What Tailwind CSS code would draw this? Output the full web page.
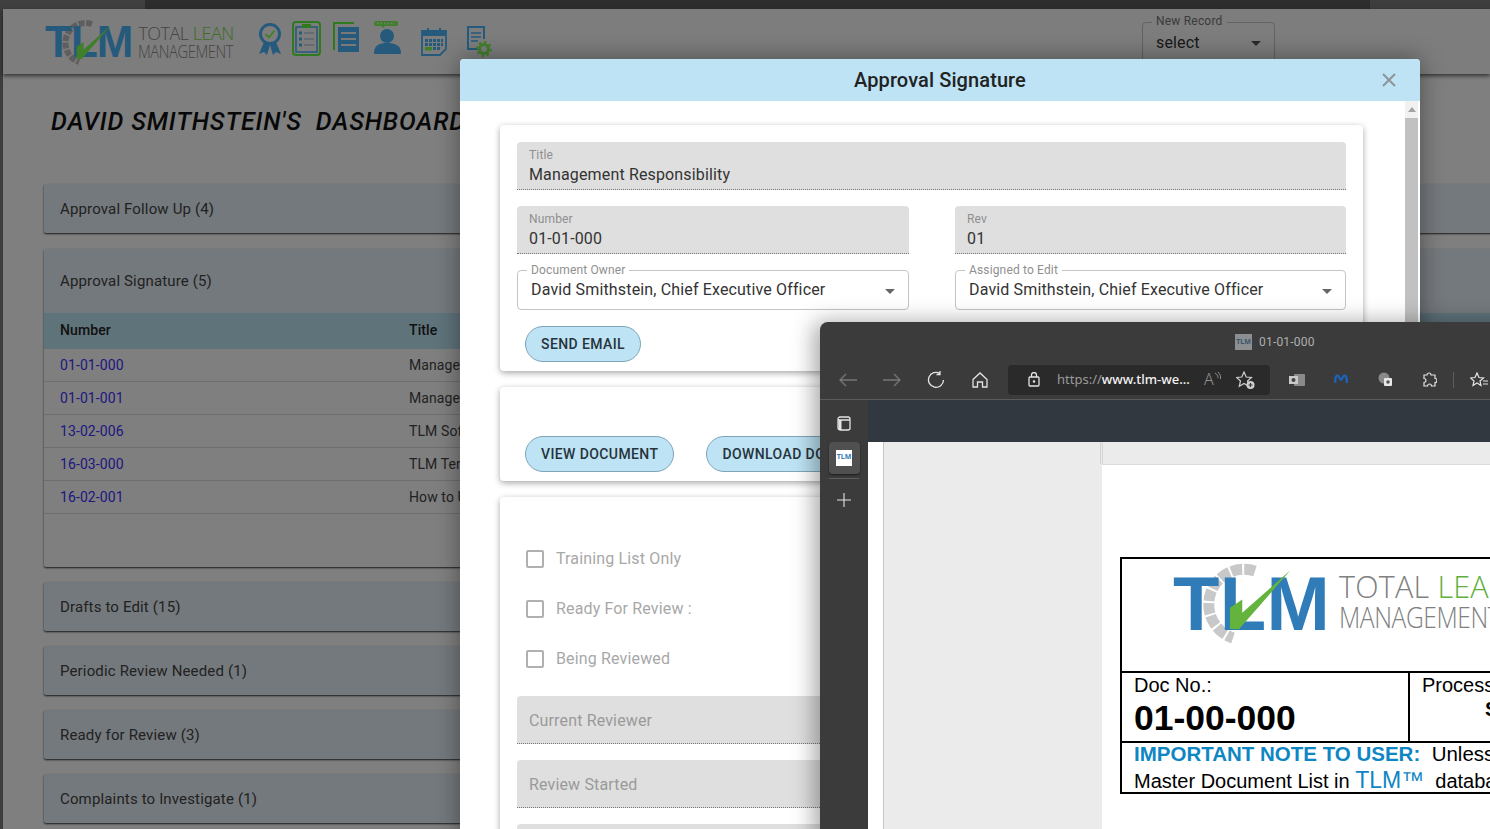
<!DOCTYPE html>
<html lang="en">
<head>
  <meta charset="UTF-8">
  <title>Approval Signature</title>
  <script src="https://cdn.jsdelivr.net/npm/@tailwindcss/browser@4"></script>
</head>
<body class="m-0 overflow-hidden">
<div class="relative w-[1490px] h-[829px] overflow-hidden bg-white font-['Roboto',sans-serif]">

  <!-- dashboard behind the dialog -->
  <div class="flex flex-col h-full">
    <div class="flex h-[9px] shrink-0 bg-[#7a7a7a]">
      <div class="w-[145px] bg-[#808080]"></div>
      <div class="w-[1225px] bg-[#5a5a5a]"></div>
    </div>
    <div class="flex flex-1 min-h-0">
      <div class="w-[3px] bg-[#7a7a7a] shrink-0"></div>
      <div class="flex-1 min-w-0 flex flex-col">
        <header class="h-[65px] shrink-0 bg-[#fafafa] flex items-center shadow-[0_2px_4px_rgba(0,0,0,0.6)] relative">
          <div class="flex items-center ml-[42px] mt-[1px] w-[196px] h-[44px] relative">
            <svg class="absolute left-[13px] top-[-3px]" width="50" height="50" viewBox="0 0 50 50"><path d="M34 7A20 20 0 0 0 21 45" fill="none" stroke="#bdbdbd" stroke-width="6" stroke-dasharray="6 1.500"/></svg>
            <span class="relative font-['Liberation_Sans',sans-serif] font-bold text-[44px] leading-none tracking-[-1px] text-[#4cb4fa]">TLM</span>
            <svg class="absolute left-[30px] top-[4px]" width="38" height="36" viewBox="380 55 200 190"><path d="M388 238V175L425 150V190L570 62L415 240Z" fill="#7eff54"/></svg>
            <div class="relative ml-[6px] font-['Open_Sans',sans-serif] font-light text-[#8a8a8a] text-[18px] leading-[18px] tracking-[-0.5px] whitespace-nowrap">
              <div>TOTAL <span class="text-[#7ed84e]">LEAN</span></div>
              <div class="origin-left scale-x-[0.82]">MANAGEMENT</div>
            </div>
          </div>
          <div class="absolute left-[255px] top-[13px] flex items-start">
            <svg width="24" height="34" viewBox="0 0 24 34"><circle cx="12" cy="12" r="9.500" fill="none" stroke="#4cb4fa" stroke-width="3"/><path d="M7.500 12 L11 15.500 L16.500 8.500" fill="none" stroke="#7eff54" stroke-width="1.800"/><path d="M6 20 L1 32 L6 30 L9 33 L12 23 L15 33 L18 30 L23 32 L18 20 L12 23Z" fill="#4cb4fa"/></svg>
            <div class="w-[29px] h-[35px] ml-[10px] -mt-[1px] rounded-[4px] border-[2px] border-[#5ef43e] flex items-center justify-center">
              <svg width="23" height="29" viewBox="0 0 23 29"><rect x="1" y="3" width="21" height="25" fill="none" stroke="#4cb4fa" stroke-width="1.600"/><rect x="7" y="0" width="9" height="4" fill="#5ef43e"/><path d="M4 9h3M4 15h3M4 21h3" stroke="#4cb4fa" stroke-width="3"/><path d="M9 9h10M9 15h10M9 21h10" stroke="#bcd" stroke-width="1.500"/></svg>
            </div>
            <svg class="ml-[12px]" width="27" height="31" viewBox="0 0 27 31"><path d="M1 28V1h20" fill="none" stroke="#5ef43e" stroke-width="2"/><rect x="5" y="5" width="21" height="25" fill="#4cb4fa"/><path d="M8 11h15M8 17h15M8 23h15" stroke="#f2f2f2" stroke-width="2"/></svg>
            <svg class="ml-[13px] -mt-[1px]" width="29" height="33" viewBox="0 0 29 33"><rect x="1" y="0" width="24" height="5" rx="2" fill="#7eff54"/><path d="M4 2.500h18" stroke="#fafafa" stroke-width="1.500" stroke-dasharray="1.500 2"/><path d="M8 5l2 2 2-2z" fill="#7eff54"/><circle cx="14" cy="15" r="7" fill="#4cb4fa"/><path d="M1 32c0-8 6-10 13-10s14 2 14 10c0 1-1 1-2 1H3c-1 0-2 0-2-1z" fill="#4cb4fa"/></svg>
            <svg class="ml-[19px] mt-[5px]" width="26" height="29" viewBox="0 0 26 29"><path d="M1 4h24v18l-6 6H1z" fill="none" stroke="#4cb4fa" stroke-width="1.800"/><rect x="1" y="4" width="24" height="5" fill="#4cb4fa"/><path d="M7 1v6M19 1v6" stroke="#4cb4fa" stroke-width="2"/><path d="M4 13.500h18M4 17.500h18" stroke="#4cb4fa" stroke-width="3" stroke-dasharray="3 1"/><rect x="4" y="20" width="7" height="3.500" fill="#7eff54"/><path d="M12 20h3v3h-3zM16 20h3v3h-3z" fill="#4cb4fa"/></svg>
            <svg class="ml-[19px] mt-[3px]" width="26" height="32" viewBox="0 0 26 32"><path d="M12 24H2V2h16v12" fill="none" stroke="#4cb4fa" stroke-width="2"/><path d="M5 8h10M5 12h10M5 16h7" stroke="#4cb4fa" stroke-width="1.500"/><circle cx="18" cy="24" r="4.500" fill="none" stroke="#7eff54" stroke-width="3"/><circle cx="18" cy="24" r="6.800" fill="none" stroke="#7eff54" stroke-width="2.200" stroke-dasharray="2.500 2.800"/></svg>
          </div>
          <div class="absolute left-[1139px] top-[13px] w-[133px] h-[44px] rounded-[4px] border border-[#c4c4c4]">
            <span class="absolute left-[9px] -top-[9px] px-[4px] bg-[#fafafa] text-[12px] leading-[14px] tracking-[0.2px] text-[#777]">New Record</span>
            <span class="absolute left-[13px] top-[10px] text-[16px] leading-[20px] tracking-[0.15px] text-[#333]">select</span>
            <span class="absolute right-[13px] top-[18px] w-0 h-0 border-x-[5px] border-x-transparent border-t-[5px] border-t-[#555]"></span>
          </div>
        </header>

        <main class="flex-1 min-h-0 pl-[41px] pt-[33px] bg-white">
          <h1 class="ml-[7px] italic font-medium text-[25px] leading-[30px] tracking-[0.85px] text-[#111] whitespace-pre">DAVID SMITHSTEIN'S  DASHBOARD</h1>
          <div class="mt-[47px] w-[1500px] flex flex-col gap-[15px] text-[15px] text-[#444] tracking-[0.15px]">
            <div class="h-[49px] mb-[1px] flex items-center pl-[16px] pt-[1px] bg-[#e9f3fa] shadow-[0_1px_2px_rgba(0,0,0,0.8)] rounded-[2px]">Approval Follow Up (4)</div>

            <div class="h-[318px] bg-[#fff] shadow-[0_1px_2px_rgba(0,0,0,0.8)] rounded-[2px] flex flex-col">
              <div class="h-[64px] flex items-center pl-[16px] bg-[#e9f3fa]">Approval Signature (5)</div>
              <div class="h-[36px] flex items-center pl-[16px] pb-[1px] bg-[#bfe7f7] text-[14px] font-medium text-[#222] tracking-[0.1px]">
                <span class="w-[349px]">Number</span><span>Title</span>
              </div>
              <div class="text-[14px] tracking-[0.1px] text-[#444]">
                <div class="h-[33px] flex items-center pl-[16px] border-b border-[#ddd]"><a class="w-[349px] text-[#4030ff]">01-01-000</a><span>Management Responsibility</span></div>
                <div class="h-[33px] flex items-center pl-[16px] border-b border-[#ddd]"><a class="w-[349px] text-[#4030ff]">01-01-001</a><span>Management Review</span></div>
                <div class="h-[33px] flex items-center pl-[16px] border-b border-[#ddd]"><a class="w-[349px] text-[#4030ff]">13-02-006</a><span>TLM Software</span></div>
                <div class="h-[33px] flex items-center pl-[16px] border-b border-[#ddd]"><a class="w-[349px] text-[#4030ff]">16-03-000</a><span>TLM Terms</span></div>
                <div class="h-[33px] flex items-center pl-[16px] border-b border-[#ddd]"><a class="w-[349px] text-[#4030ff]">16-02-001</a><span>How to Use</span></div>
              </div>
            </div>

            <div class="h-[49px] flex items-center pl-[16px] pt-[1px] bg-[#e9f3fa] shadow-[0_1px_2px_rgba(0,0,0,0.8)] rounded-[2px]">Drafts to Edit (15)</div>
            <div class="h-[49px] flex items-center pl-[16px] pt-[1px] bg-[#e9f3fa] shadow-[0_1px_2px_rgba(0,0,0,0.8)] rounded-[2px]">Periodic Review Needed (1)</div>
            <div class="h-[49px] flex items-center pl-[16px] pt-[1px] bg-[#e9f3fa] shadow-[0_1px_2px_rgba(0,0,0,0.8)] rounded-[2px]">Ready for Review (3)</div>
            <div class="h-[49px] flex items-center pl-[16px] pt-[1px] bg-[#e9f3fa] shadow-[0_1px_2px_rgba(0,0,0,0.8)] rounded-[2px]">Complaints to Investigate (1)</div>
          </div>
        </main>
      </div>
    </div>
  </div>

  <!-- backdrop -->
  <div class="absolute inset-0 bg-black/50"></div>

  <!-- dialog -->
  <div class="absolute left-[460px] top-[59px] w-[960px] h-[790px] bg-white rounded-t-[4px] flex flex-col shadow-[0_0_24px_rgba(0,0,0,0.4)]">
    <div class="h-[42px] shrink-0 bg-[#bde3f4] rounded-t-[4px] flex items-center justify-center relative">
      <h2 class="text-[20px] font-medium text-[#222] tracking-[0.1px]">Approval Signature</h2>
      <svg class="absolute right-[23px] top-[13px]" width="16" height="16" viewBox="0 0 16 16"><path d="M2 2 L14 14 M14 2 L2 14" stroke="#8c9499" stroke-width="2"/></svg>
    </div>
    <div class="flex flex-1 min-h-0">
      <div class="flex-1 min-w-0 pl-[40px] pr-[42px] pt-[24px] flex flex-col gap-[16px]">

        <section class="h-[246px] shrink-0 rounded-[4px] bg-white shadow-[0_2px_6px_rgba(0,0,0,0.35)] px-[17px] pt-[17px] pb-[9px] flex flex-col gap-[16px] tracking-[0.15px]">
          <div class="h-[48px] shrink-0 bg-[#dfdfdf] rounded-t-[4px] border-b border-dotted border-[#777] px-[12px] pt-[6px]">
            <div class="text-[12px] leading-[14px] text-[#8f8f8f]">Title</div>
            <div class="text-[16px] leading-[22px] mt-[2px] text-[#333]">Management Responsibility</div>
          </div>
          <div class="grid grid-cols-[392px_391px] gap-x-[46px]">
            <div class="h-[48px] bg-[#dfdfdf] rounded-t-[4px] border-b border-dotted border-[#777] px-[12px] pt-[6px]">
              <div class="text-[12px] leading-[14px] text-[#8f8f8f]">Number</div>
              <div class="text-[16px] leading-[22px] mt-[2px] text-[#333]">01-01-000</div>
            </div>
            <div class="h-[48px] bg-[#dfdfdf] rounded-t-[4px] border-b border-dotted border-[#777] px-[12px] pt-[6px]">
              <div class="text-[12px] leading-[14px] text-[#8f8f8f]">Rev</div>
              <div class="text-[16px] leading-[22px] mt-[2px] text-[#333]">01</div>
            </div>
          </div>
          <div class="grid grid-cols-[392px_391px] gap-x-[46px]">
            <div class="relative h-[40px] rounded-[4px] border border-[#c4c4c4]">
              <span class="absolute left-[9px] -top-[8px] px-[4px] bg-white text-[12px] leading-[14px] text-[#8f8f8f]">Document Owner</span>
              <span class="absolute left-[13px] top-[9px] text-[16px] leading-[20px] text-[#333]">David Smithstein, Chief Executive Officer</span>
              <span class="absolute right-[13px] top-[18px] w-0 h-0 border-x-[5px] border-x-transparent border-t-[5px] border-t-[#666]"></span>
            </div>
            <div class="relative h-[40px] rounded-[4px] border border-[#c4c4c4]">
              <span class="absolute left-[9px] -top-[8px] px-[4px] bg-white text-[12px] leading-[14px] text-[#8f8f8f]">Assigned to Edit</span>
              <span class="absolute left-[13px] top-[9px] text-[16px] leading-[20px] text-[#333]">David Smithstein, Chief Executive Officer</span>
              <span class="absolute right-[13px] top-[18px] w-0 h-0 border-x-[5px] border-x-transparent border-t-[5px] border-t-[#666]"></span>
            </div>
          </div>
          <button class="self-start shrink-0 ml-[8px] h-[36px] px-[15px] rounded-[18px] bg-[#bde3f4] border border-[#7fa5b8] text-[14px] font-medium tracking-[0.4px] text-[#27343c]">SEND EMAIL</button>
        </section>

        <section class="h-[94px] shrink-0 rounded-[4px] bg-white shadow-[0_2px_6px_rgba(0,0,0,0.35)] pl-[25px] pt-[49px] flex gap-[32px]">
          <button class="h-[36px] px-[15px] rounded-[18px] bg-[#bde3f4] border border-[#7fa5b8] text-[14px] font-medium tracking-[0.4px] text-[#27343c] whitespace-nowrap">VIEW DOCUMENT</button>
          <button class="h-[36px] px-[15px] rounded-[18px] bg-[#bde3f4] border border-[#7fa5b8] text-[14px] font-medium tracking-[0.4px] text-[#27343c] whitespace-nowrap">DOWNLOAD DOCUMENT</button>
        </section>

        <section class="flex-1 rounded-[4px] bg-white shadow-[0_2px_6px_rgba(0,0,0,0.35)] px-[17px] pt-[50px] tracking-[0.15px]">
          <div class="flex flex-col gap-[26px] pl-[9px] text-[16px] leading-[24px] text-[#a8a8a8]">
            <label class="flex items-center gap-[12px]"><span class="w-[18px] h-[18px] rounded-[2px] border-2 border-[#b0b0b0]"></span>Training List Only</label>
            <label class="flex items-center gap-[12px]"><span class="w-[18px] h-[18px] rounded-[2px] border-2 border-[#b0b0b0]"></span>Ready For Review :</label>
            <label class="flex items-center gap-[12px]"><span class="w-[18px] h-[18px] rounded-[2px] border-2 border-[#b0b0b0]"></span>Being Reviewed</label>
          </div>
          <div class="mt-[25px] flex flex-col gap-[16px]">
            <div class="h-[48px] flex items-center pt-[3px] bg-[#dfdfdf] rounded-t-[4px] border-b border-dotted border-[#777] px-[12px] text-[16px] text-[#9a9a9a]">Current Reviewer</div>
            <div class="h-[48px] flex items-center pt-[3px] bg-[#dfdfdf] rounded-t-[4px] border-b border-dotted border-[#777] px-[12px] text-[16px] text-[#9a9a9a]">Review Started</div>
            <div class="h-[48px] bg-[#dfdfdf] rounded-t-[4px]"></div>
          </div>
        </section>
      </div>

      <div class="w-[13px] shrink-0 mr-[2px] bg-[#f1f1f1] flex flex-col items-center">
        <span class="mt-[6px] mb-[6px] w-0 h-0 border-x-[4px] border-x-transparent border-b-[5px] border-b-[#a3a3a3]"></span>
        <div class="w-full flex-1 bg-[#c1c1c1]"></div>
      </div>
    </div>
  </div>

  <!-- pop-up browser window with the document -->
  <div class="absolute left-[820px] top-[322px] w-[760px] h-[520px] bg-[#3b3b3b] rounded-tl-[8px] flex flex-col overflow-hidden shadow-[-6px_0_22px_rgba(0,0,0,0.35)] font-['Noto_Sans',sans-serif]">
    <div class="h-[38px] shrink-0 flex items-center pl-[415px] pt-[2px] gap-[7px] text-[12px] text-[#aeaeae]">
      <span class="w-[17px] h-[16px] bg-[#8b8f92] text-[7px] leading-[16px] text-center font-bold text-[#3a5566]">TLM</span>
      <span class="font-['Roboto',sans-serif] tracking-[0.2px]">01-01-000</span>
    </div>
    <div class="h-[40px] shrink-0 flex items-center pl-[6px] border-b border-[#5c5c5c] text-[#e4e4e4]">
      <span class="w-[44px] flex justify-center"><svg width="18" height="14" viewBox="0 0 18 14" fill="none" stroke="#777" stroke-width="1.300"><path d="M18 7H1M7 1L1 7l6 6"/></svg></span>
      <span class="w-[44px] flex justify-center"><svg width="18" height="14" viewBox="0 0 18 14" fill="none" stroke="#777" stroke-width="1.300"><path d="M0 7h17M11 1l6 6-6 6"/></svg></span>
      <span class="w-[44px] flex justify-center"><svg width="18" height="18" viewBox="0 0 18 18" fill="none" stroke="#e4e4e4" stroke-width="1.300"><path d="M13 2.500A7.500 7.500 0 1 0 16.500 9M13 0v3.500H9.500" /></svg></span>
      <span class="w-[44px] flex justify-center"><svg width="16" height="16" viewBox="0 0 16 16" fill="none" stroke="#e4e4e4" stroke-width="1.300"><path d="M1 7.500L8 1l7 6.500V15h-4.500V10h-5v5H1z"/></svg></span>
      <div class="ml-[6px] w-[262px] h-[30px] shrink-0 bg-[#2a2a2a] rounded-[4px] flex items-center relative text-[13px] whitespace-nowrap">
        <svg class="ml-[20px]" width="12" height="15" viewBox="0 0 12 15" fill="none" stroke="#e4e4e4" stroke-width="1.300"><rect x="1" y="5" width="10" height="9" rx="1"/><path d="M3.500 5V3a2.500 2.500 0 0 1 5 0v2"/><circle cx="6" cy="9.500" r="0.600"/></svg>
        <span class="ml-[17px] pt-[1px] text-[#9a9a9a]">https://</span><span class="pt-[1px] text-[#f2f2f2] font-medium">www.tlm-we...</span>
        <span class="absolute left-[196px] top-[2px] text-[16px] text-[#8f8f8f] font-light">A</span>
        <svg class="absolute left-[206px] top-[7px]" width="7" height="9" viewBox="0 0 7 9" fill="none" stroke="#8f8f8f"><path d="M1 1c2 1 3 3 3 5M4 0c2 2 3 4 2.500 7"/></svg>
        <svg class="absolute left-[228px] top-[6px]" width="20" height="19" viewBox="0 0 20 19" fill="none" stroke="#cfcfcf" stroke-width="1.200"><path d="M8 1l2.200 5 5.300.5-4 3.500 1.200 5.200L8 12.500 3.300 15.200 4.500 10l-4-3.500L5.800 6z"/><circle cx="14.500" cy="14" r="4" fill="#cfcfcf" stroke="none"/><path d="M12.500 14h4M14.500 12v4" stroke="#333"/></svg>
      </div>
      <span class="ml-[5px] w-[44px] flex justify-center"><svg width="16" height="14" viewBox="0 0 16 14"><rect x="5" y="1" width="11" height="12" rx="1" fill="#8a8a8a"/><rect x="0" y="3" width="9" height="8" fill="#c9c9c9"/><circle cx="4.500" cy="7" r="2" fill="#444"/></svg></span>
      <span class="w-[44px] flex justify-center"><svg width="14" height="11" viewBox="0 0 14 11" fill="none" stroke="#1c62b8" stroke-width="2.400"><path d="M1.500 9C.5 5 2 1.500 3.500 1.500 5 1.500 6 6 7 6s2-4.500 3.500-4.500S13.500 5 12.500 9"/></svg></span>
      <span class="w-[44px] flex justify-center"><svg width="15" height="15" viewBox="0 0 15 15"><circle cx="6" cy="6" r="5.500" fill="#8a8a8a"/><rect x="6" y="6" width="8" height="8" rx="1" fill="#e8e8e8"/><circle cx="10" cy="10" r="1.800" fill="#555"/></svg></span>
      <span class="w-[44px] flex justify-center"><svg width="16" height="16" viewBox="0 0 16 16" fill="none" stroke="#e4e4e4" stroke-width="1.200"><path d="M6 3a2 2 0 0 1 4 0h4v3.500a2 2 0 0 1 0 4V14h-3.500a2 2 0 0 0-4 0H3v-3.500a2 2 0 0 0 0-4V3z"/></svg></span>
      <span class="w-[1px] h-[16px] bg-[#5c5c5c] ml-[2px]"></span>
      <span class="ml-[16px]"><svg width="18" height="16" viewBox="0 0 18 16" fill="none" stroke="#e4e4e4" stroke-width="1.200"><path d="M7 1l2 4.500 4.500.5-3.500 3 1 4.500L7 11l-4 2.500 1-4.500-3.500-3L5 5.500z"/><path d="M13 9h5M13 12h5"/></svg></span>
    </div>
    <div class="flex flex-1 min-h-0">
      <nav class="w-[48px] shrink-0 flex flex-col items-center relative">
        <svg class="mt-[16px]" width="14" height="15" viewBox="0 0 14 15" fill="none" stroke="#e4e4e4" stroke-width="1.300"><rect x="1" y="1" width="12" height="13" rx="2"/><path d="M1 4h12"/><rect x="1.500" y="4" width="3" height="10" fill="#e4e4e4" stroke="none"/></svg>
        <div class="mt-[11px] w-[31px] h-[32px] rounded-[4px] bg-[#505050] flex items-center justify-center shadow-[0_1px_2px_rgba(0,0,0,0.5)]">
          <span class="w-[16px] h-[16px] bg-white text-[7px] leading-[14px] text-center font-bold text-[#2f7cb8]">TLM</span>
        </div>
        <div class="mt-[4px] w-[30px] h-px bg-[#5c5c5c]"></div>
        <svg class="mt-[14px]" width="14" height="14" viewBox="0 0 14 14" stroke="#e4e4e4" stroke-width="1.100"><path d="M7 0v14M0 7h14"/></svg>
      </nav>
      <div class="flex-1 min-w-0 flex flex-col">
        <div class="h-[42px] shrink-0 bg-[#32383f]"></div>
        <div class="flex-1 flex bg-white min-h-0">
          <div class="w-[16px] shrink-0 border-r border-[#c6c6c6]"></div>
          <div class="flex-1 bg-[#ebebeb] pl-[216px] flex flex-col">
            <div class="h-[22px] shrink-0 w-[3px] border-x border-[#d4d4d4]"></div>
            <div class="flex-1 ml-[2px] bg-white border-t border-[#dcdcdc] pl-[18px] pt-[92px] font-['Liberation_Sans',sans-serif]">
              <div class="w-[500px] border-2 border-black border-r-0 text-black">
                <div class="h-[112px] flex items-start pl-[51px] pt-[14px] relative">
                  <svg class="absolute left-[73px] top-[-1px]" width="90" height="90" viewBox="0 0 90 90"><path d="M60 13A35 35 0 0 0 38 80" fill="none" stroke="#c8c8c8" stroke-width="11" stroke-dasharray="11 2"/></svg>
                  <span class="relative font-bold text-[76px] leading-[62px] tracking-[0.3px] text-[#2f7cb8]">TLM</span>
                  <svg class="absolute left-[105px] top-[9px]" width="67" height="63" viewBox="380 55 200 190"><path d="M388 238V175L425 150V190L570 62L415 240Z" fill="#63b33d"/></svg>
                  <div class="relative ml-[9px] mt-[-2px] font-['Open_Sans',sans-serif] font-light text-[#808080] text-[30.5px] leading-[30px] tracking-[0.2px] whitespace-nowrap">
                    <div>TOTAL <span class="text-[#62b03c]">LEAN</span></div>
                    <div class="origin-left scale-x-[0.82] text-[30px] leading-[31px] tracking-[-0.5px]">MANAGEMENT</div>
                  </div>
                </div>
                <div class="h-[70px] flex border-t-2 border-black">
                  <div class="w-[288px] shrink-0 border-r-2 border-black pl-[12px]">
                    <div class="text-[20px] leading-[26px] -mt-[1px]">Doc No.:</div>
                    <div class="text-[35.5px] leading-[38px] font-bold mt-[1px]">01-00-000</div>
                  </div>
                  <div class="pl-[12px] text-[20px] leading-[26px] -mt-[1px] relative flex-1">Process
                    <div class="absolute left-[75px] top-[24px] font-bold">S</div>
                  </div>
                </div>
                <div class="h-[51px] border-t-2 border-black pl-[12px] text-[20.5px] leading-[26px] whitespace-nowrap">
                  <div class="-mt-[2px]"><b class="text-[#0e86c4]">IMPORTANT NOTE TO USER:</b> &nbsp;Unless</div>
                  <div class="text-[20px]">Master Document List in <span class="text-[#0e86c4] text-[23px]">TLM™</span> &nbsp;database</div>
                </div>
              </div>
            </div>
          </div>
        </div>
      </div>
    </div>
  </div>
</div>
</body>
</html>
